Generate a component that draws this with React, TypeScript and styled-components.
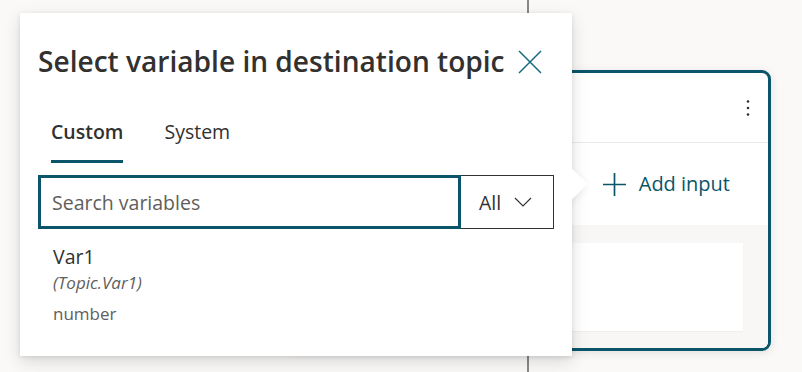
import React from "react";
import styled, { createGlobalStyle } from "styled-components";

const GlobalStyle = createGlobalStyle`
  html, body {
    margin: 0;
    padding: 0;
    background: #faf9f8;
    font-family: "Open Sans", "Noto Sans", sans-serif;
    color: #323130;
  }
  * { box-sizing: border-box; }
`;

const TEAL = "#0b556a";

const Canvas = styled.div`
  position: relative;
  width: 802px;
  height: 372px;
  overflow: hidden;
  background: #faf9f8;
`;

const Connector = styled.div`
  position: absolute;
  left: 527px;
  top: 0;
  width: 2px;
  height: 372px;
  background: #8a8886;
`;

const NodeCard = styled.div`
  position: absolute;
  left: 285px;
  top: 70px;
  width: 486px;
  height: 281px;
  border: 3px solid ${TEAL};
  border-radius: 9px;
  background: #ffffff;
  box-shadow: 0 2px 10px rgba(0, 0, 0, 0.1);
  display: flex;
  flex-direction: column;
  overflow: hidden;
`;

const CardHeader = styled.div`
  height: 70px;
  flex: none;
  display: flex;
  align-items: center;
  justify-content: flex-end;
  padding-right: 16px;
  border-bottom: 1px solid #edebe9;
`;

const KebabButton = styled.div`
  width: 8px;
  height: 20px;
  display: flex;
  align-items: center;
  justify-content: center;
  color: #323130;
`;

const AddInputRow = styled.div`
  height: 82px;
  flex: none;
  display: flex;
  align-items: center;
  justify-content: flex-end;
  padding-right: 38px;
  gap: 12px;
  color: ${TEAL};
  font-size: 20px;
  line-height: 28px;
`;

const CardBody = styled.div`
  flex: 1;
  background: #f8f7f6;
  padding: 18px 25px 17px 25px;
  display: flex;
`;

const InnerBox = styled.div`
  flex: 1;
  background: #ffffff;
  box-shadow: 0 1px 1px rgba(0, 0, 0, 0.03);
`;

const Callout = styled.div`
  position: absolute;
  left: 20px;
  top: 13px;
  width: 552px;
  height: 343px;
  background: #ffffff;
  box-shadow: 0 6px 16px rgba(0, 0, 0, 0.13), 0 1px 4px rgba(0, 0, 0, 0.1);
`;

const Beak = styled.div`
  position: absolute;
  left: 541px;
  top: 160px;
  width: 22px;
  height: 22px;
  background: #ffffff;
  transform: rotate(45deg);
  box-shadow: 0 3px 10px rgba(0, 0, 0, 0.1);
`;

const CalloutMain = styled.div`
  position: relative;
  z-index: 1;
  height: 100%;
  background: #ffffff;
  padding: 29px 18px 0 18px;
  display: flex;
  flex-direction: column;
`;

const Header = styled.div`
  display: flex;
  align-items: center;
  gap: 13px;
`;

const Title = styled.h2`
  margin: 0;
  font-size: 28.1px;
  line-height: 39px;
  font-weight: 600;
  color: #323130;
  white-space: nowrap;
`;

const CloseButton = styled.div`
  width: 24px;
  height: 24px;
  display: flex;
  align-items: center;
  justify-content: center;
  color: #136a80;
`;

const Tabs = styled.div`
  display: flex;
  gap: 41px;
  margin-top: 37px;
  padding-left: 13px;
`;

const Tab = styled.div<{ $active?: boolean }>`
  display: flex;
  flex-direction: column;
  font-size: 19.5px;
  line-height: 28px;
  font-weight: ${(p) => (p.$active ? 600 : 400)};
  color: #323130;

  &::after {
    content: "";
    display: block;
    height: 3px;
    margin-top: 14px;
    background: ${(p) => (p.$active ? TEAL : "transparent")};
  }
`;

const SearchRow = styled.div`
  display: flex;
  height: 54px;
  margin-top: 12px;
`;

const SearchInput = styled.div`
  width: 423px;
  height: 100%;
  border: 3px solid ${TEAL};
  display: flex;
  align-items: center;
  padding-left: 11px;
  font-size: 19.5px;
  color: #605e5c;
`;

const Dropdown = styled.div`
  width: 93px;
  height: 100%;
  border: 1px solid #323130;
  border-left: none;
  display: flex;
  align-items: center;
  padding-left: 18px;
  gap: 13px;
  font-size: 19.5px;
  color: #323130;
`;

const VarList = styled.div`
  display: flex;
  flex-direction: column;
  padding: 14px 0 0 15px;
`;

const VarName = styled.div`
  font-size: 19.5px;
  line-height: 28px;
  color: #323130;
`;

const VarPath = styled.div`
  font-size: 17px;
  line-height: 24px;
  font-style: italic;
  color: #605e5c;
`;

const VarType = styled.div`
  margin-top: 7px;
  font-size: 17px;
  line-height: 24px;
  color: #605e5c;
`;

export default function App() {
  return (
    <>
      <GlobalStyle />
      <Canvas>
        <Connector />
        <NodeCard>
          <CardHeader>
            <KebabButton>
              <svg width="4" height="18" viewBox="0 0 4 18">
                <circle cx="2" cy="2.5" r="1.3" fill="currentColor" />
                <circle cx="2" cy="9" r="1.3" fill="currentColor" />
                <circle cx="2" cy="15.5" r="1.3" fill="currentColor" />
              </svg>
            </KebabButton>
          </CardHeader>
          <AddInputRow>
            <svg width="25" height="25" viewBox="0 0 25 25">
              <path d="M12.5 1 V24 M1 12.5 H24" stroke="currentColor" strokeWidth="1.7" fill="none" />
            </svg>
            <span>Add input</span>
          </AddInputRow>
          <CardBody>
            <InnerBox />
          </CardBody>
        </NodeCard>
        <Callout>
          <Beak />
          <CalloutMain>
            <Header>
              <Title>Select variable in destination topic</Title>
              <CloseButton>
                <svg width="24" height="24" viewBox="0 0 24 24">
                  <path d="M1 1 L23 23 M23 1 L1 23" stroke="currentColor" strokeWidth="1.5" fill="none" />
                </svg>
              </CloseButton>
            </Header>
            <Tabs>
              <Tab $active>Custom</Tab>
              <Tab>System</Tab>
            </Tabs>
            <SearchRow>
              <SearchInput>Search variables</SearchInput>
              <Dropdown>
                <span>All</span>
                <svg width="18" height="10" viewBox="0 0 18 10">
                  <path d="M1 1 L9 9 L17 1" stroke="#323130" strokeWidth="1.1" fill="none" />
                </svg>
              </Dropdown>
            </SearchRow>
            <VarList>
              <VarName>Var1</VarName>
              <VarPath>(Topic.Var1)</VarPath>
              <VarType>number</VarType>
            </VarList>
          </CalloutMain>
        </Callout>
      </Canvas>
    </>
  );
}
